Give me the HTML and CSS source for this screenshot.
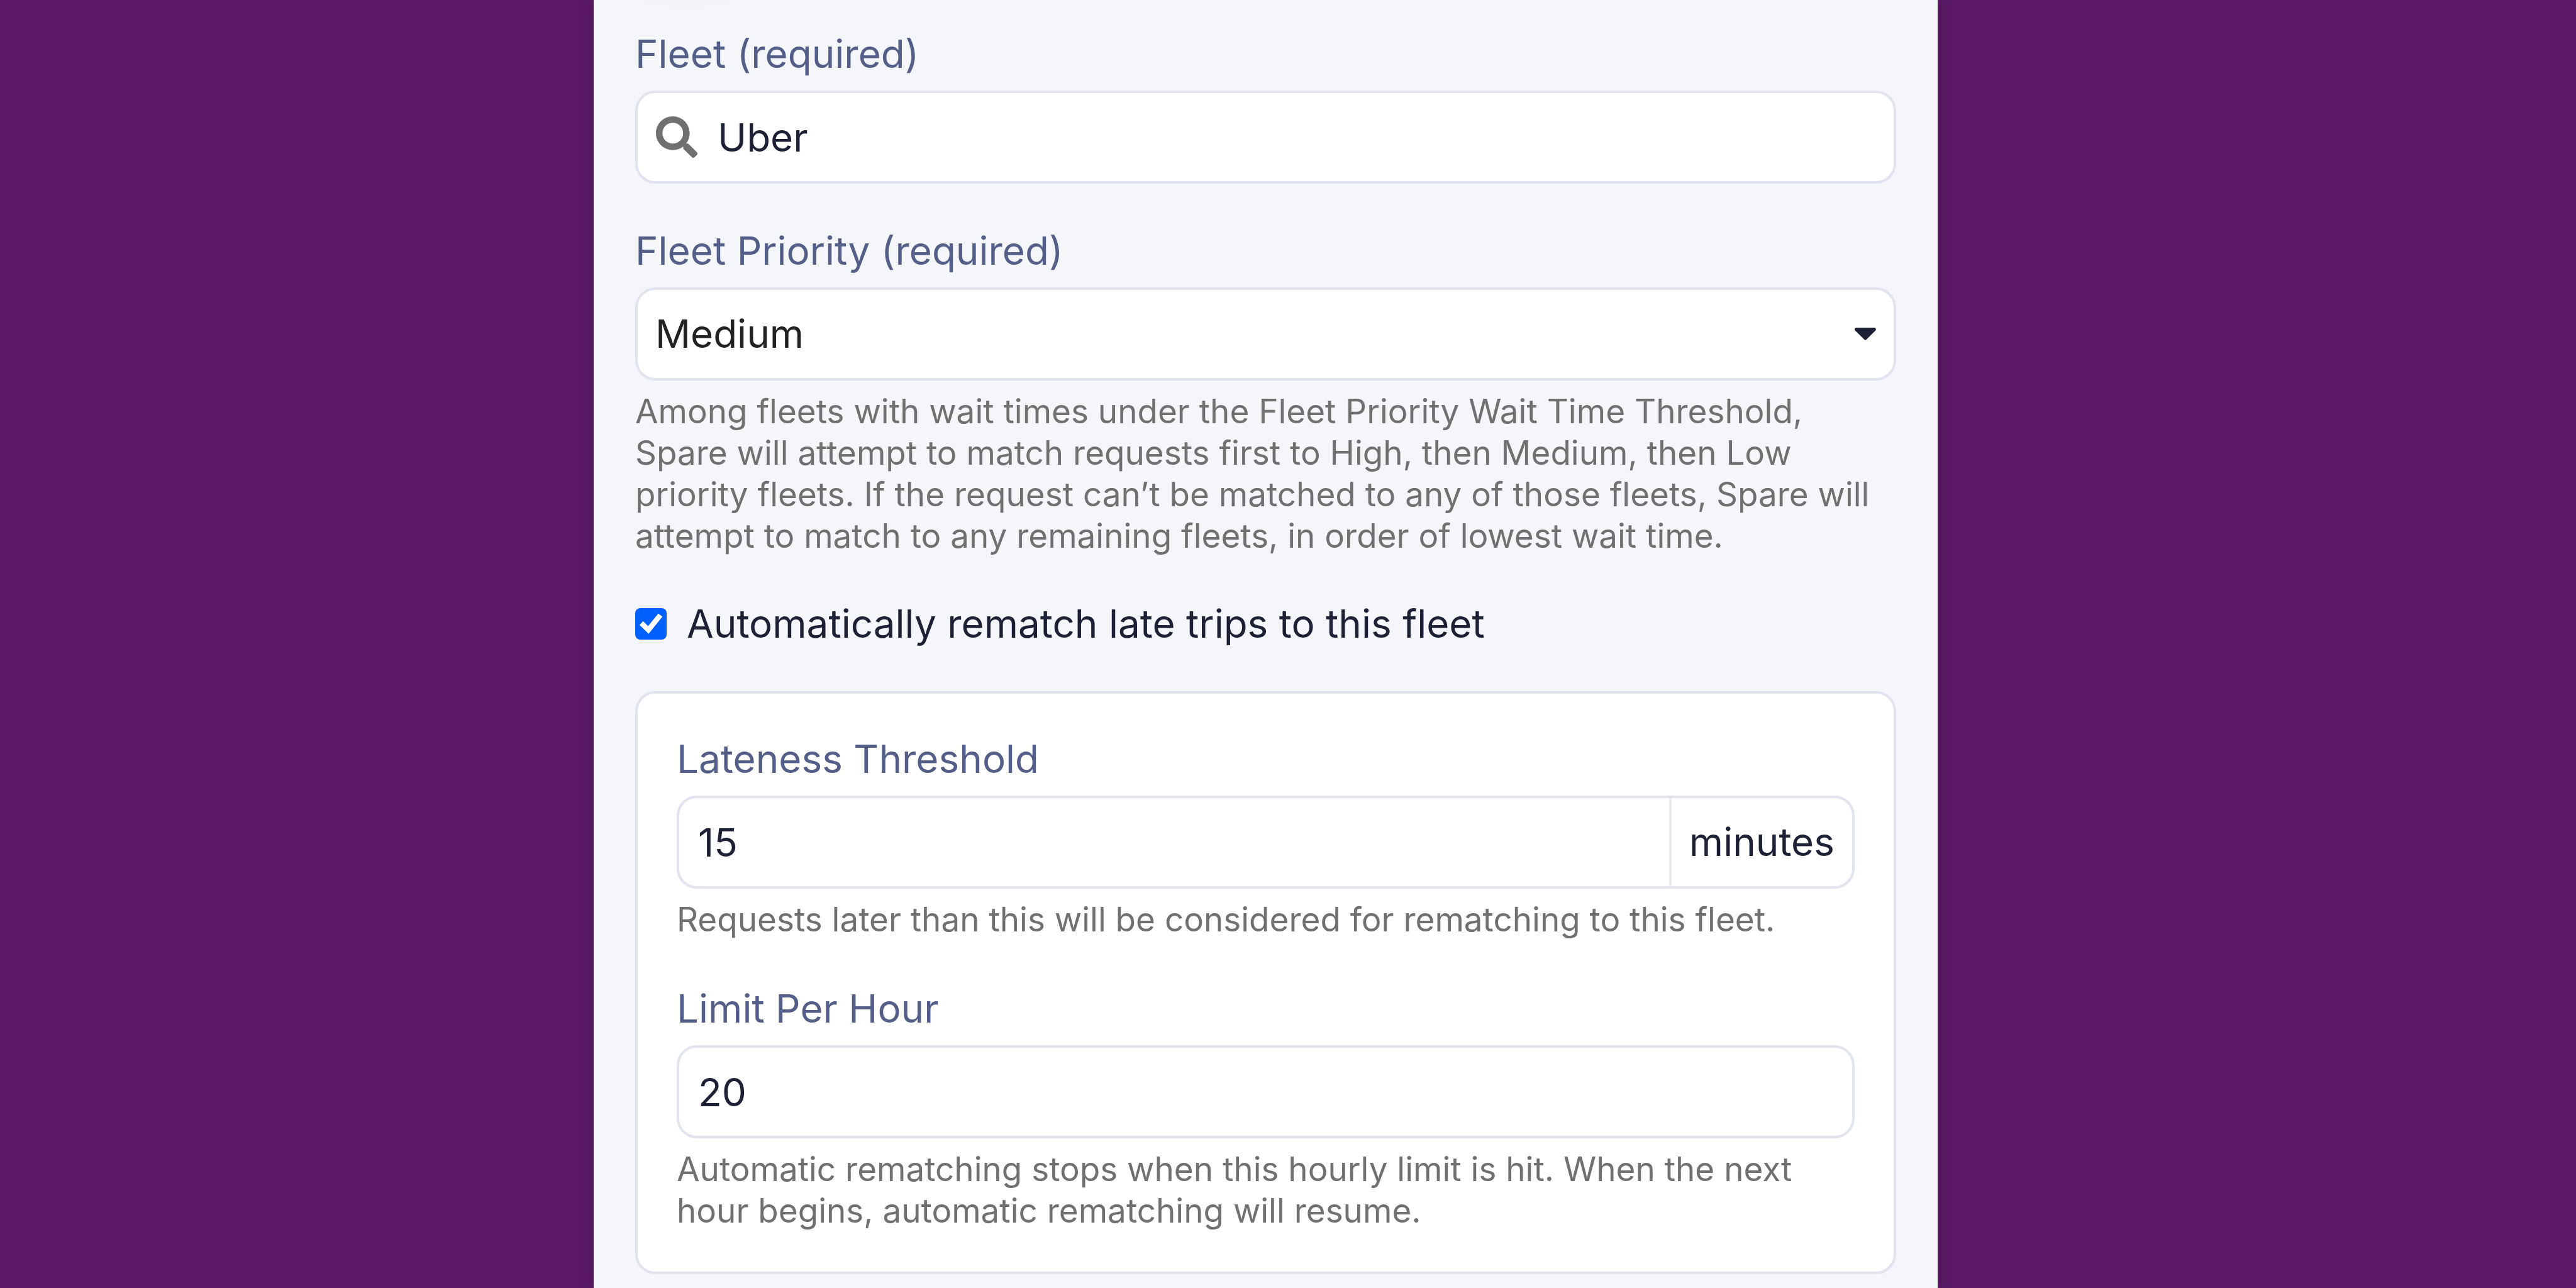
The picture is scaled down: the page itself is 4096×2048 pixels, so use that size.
FILE: index.html
```html
<!DOCTYPE html>
<html lang="en">
<head>
<meta charset="utf-8">
<title>Fleet settings</title>
<link rel="stylesheet" href="styles.css">
</head>
<body>
<div class="page">
  <main class="panel">
    <div class="toolbar-shadow"></div>
    <form class="form">
      <div class="field">
        <label class="label" for="fleet">Fleet (required)</label>
        <div class="control">
          <svg class="search-icon" viewBox="0 0 512 512" aria-hidden="true"><path fill="currentColor" d="M505 442.7L405.3 343c-4.500-4.500-10.600-7-17-7H372c27.600-35.300 44-79.700 44-128C416 93.100 322.900 0 208 0S0 93.100 0 208s93.100 208 208 208c48.300 0 92.700-16.400 128-44v16.300c0 6.400 2.500 12.500 7 17l99.700 99.700c9.400 9.400 24.600 9.400 33.900 0l28.300-28.300c9.400-9.400 9.400-24.600.1-34zM208 336c-70.700 0-128-57.200-128-128 0-70.700 57.200-128 128-128 70.700 0 128 57.200 128 128 0 70.700-57.200 128-128 128z"/></svg>
          <input class="input" id="fleet" type="text" value="Uber">
        </div>
      </div>

      <div class="field">
        <label class="label" for="priority">Fleet Priority (required)</label>
        <div class="control">
          <select class="input select" id="priority" aria-describedby="priority-help">
            <option>High</option>
            <option selected>Medium</option>
            <option>Low</option>
          </select>
          <svg class="caret-icon" viewBox="0 0 34 20" aria-hidden="true"><path fill="currentColor" d="M3 0h28c2.600 0 3.900 3 2 4.800L18.800 18.800a2.500 2.500 0 0 1-3.600 0L1 4.800C-.9 3 .4 0 3 0z"/></svg>
        </div>
        <p class="help" id="priority-help">Among fleets with wait times under the Fleet Priority Wait Time Threshold, Spare will attempt to match requests first to High, then Medium, then Low priority fleets. If the request can’t be matched to any of those fleets, Spare will attempt to match to any remaining fleets, in order of lowest wait time.</p>
      </div>

      <label class="check-row">
        <span class="check-wrap">
          <input class="checkbox" type="checkbox" checked>
          <svg class="check-icon" viewBox="0 0 50 50" aria-hidden="true"><path fill="none" stroke="#fff" stroke-width="8.300" d="M9.700 23.800L21 34.700L40 11"/></svg>
        </span>
        <span>Automatically rematch late trips to this fleet</span>
      </label>

      <section class="card">
        <div class="field">
          <label class="label" for="lateness">Lateness Threshold</label>
          <div class="control">
            <input class="input" id="lateness" type="number" value="15" aria-describedby="lateness-help">
            <span class="unit">minutes</span>
          </div>
          <p class="help" id="lateness-help">Requests later than this will be considered for rematching to this fleet.</p>
        </div>
        <div class="field">
          <label class="label" for="limit">Limit Per Hour</label>
          <div class="control">
            <input class="input" id="limit" type="number" value="20" aria-describedby="limit-help">
          </div>
          <p class="help" id="limit-help">Automatic rematching stops when this hourly limit is hit. When the next hour begins, automatic rematching will resume.</p>
        </div>
      </section>
    </form>
  </main>
</div>
</body>
</html>
```

FILE: styles.css
```css
* {
  box-sizing: border-box;
}

body {
  margin: 0;
  background: #5c1a68;
  color: #1c2136;
  font-family: Inter, "Liberation Sans", sans-serif;
  font-size: 62px;
  font-optical-sizing: none;
  line-height: 84px;
}

.page {
  display: grid;
  grid-template-columns: 944fr 2137fr 1015fr;
  min-height: 100vh;
  overflow: hidden;
}

.panel {
  grid-column: 2;
  padding: 0 66px 21px;
  background: #f4f6fa;
  box-shadow: 0 0 24px rgba(0, 0, 0, 0.25);
}

/* Lower edge of the shadow cast by the button scrolled off above */
.toolbar-shadow {
  width: 164px;
  height: 12px;
  background: radial-gradient(ellipse 50% 100% at 50% 0, #eff1f5, #f4f6fa);
}

.form {
  display: flex;
  flex-direction: column;
  gap: 65px;
  padding-top: 32px;
}

.field {
  display: flex;
  flex-direction: column;
  gap: 16px;
}

.label {
  color: #535f89;
}

.control {
  position: relative;
  display: flex;
  align-items: center;
  height: 148px;
  border: 4px solid #e1e3ef;
  border-radius: 32px;
  background: #fff;
  overflow: hidden;
}

.input {
  flex: 1;
  min-width: 0;
  height: 100%;
  margin: 0;
  padding: 0 30px;
  border: 0;
  outline: 0;
  background: transparent;
  color: inherit;
  font: inherit;
  appearance: none;
}

.input[type="number"] {
  appearance: textfield;
}

.select {
  padding: 0 28px;
  color: #222;
}

.search-icon {
  flex: none;
  width: 66px;
  height: 66px;
  margin: 0 2px 0 29px;
  color: #707070;
}

.caret-icon {
  position: absolute;
  right: 28px;
  width: 34px;
  height: 20px;
  color: #1c2136;
  pointer-events: none;
}

.unit {
  display: flex;
  align-items: center;
  height: 100%;
  padding: 0 28px;
  border-left: 4px solid #ebebeb;
}

.help {
  margin: 0;
  color: #707070;
  font-size: 53px;
  line-height: 66px;
}

.check-row {
  display: flex;
  align-items: center;
  gap: 32px;
}

.check-wrap {
  position: relative;
  display: flex;
  width: 50px;
  height: 50px;
}

.checkbox {
  width: 100%;
  height: 100%;
  margin: 0;
  border-radius: 8px;
  background: #0061ff;
  appearance: none;
}

.check-icon {
  position: absolute;
  inset: 0;
  pointer-events: none;
}

.card {
  display: flex;
  flex-direction: column;
  gap: 67px;
  padding: 62px 62px 64px;
  border: 4px solid #e1e3ef;
  border-radius: 32px;
  background: #fff;
}
```
